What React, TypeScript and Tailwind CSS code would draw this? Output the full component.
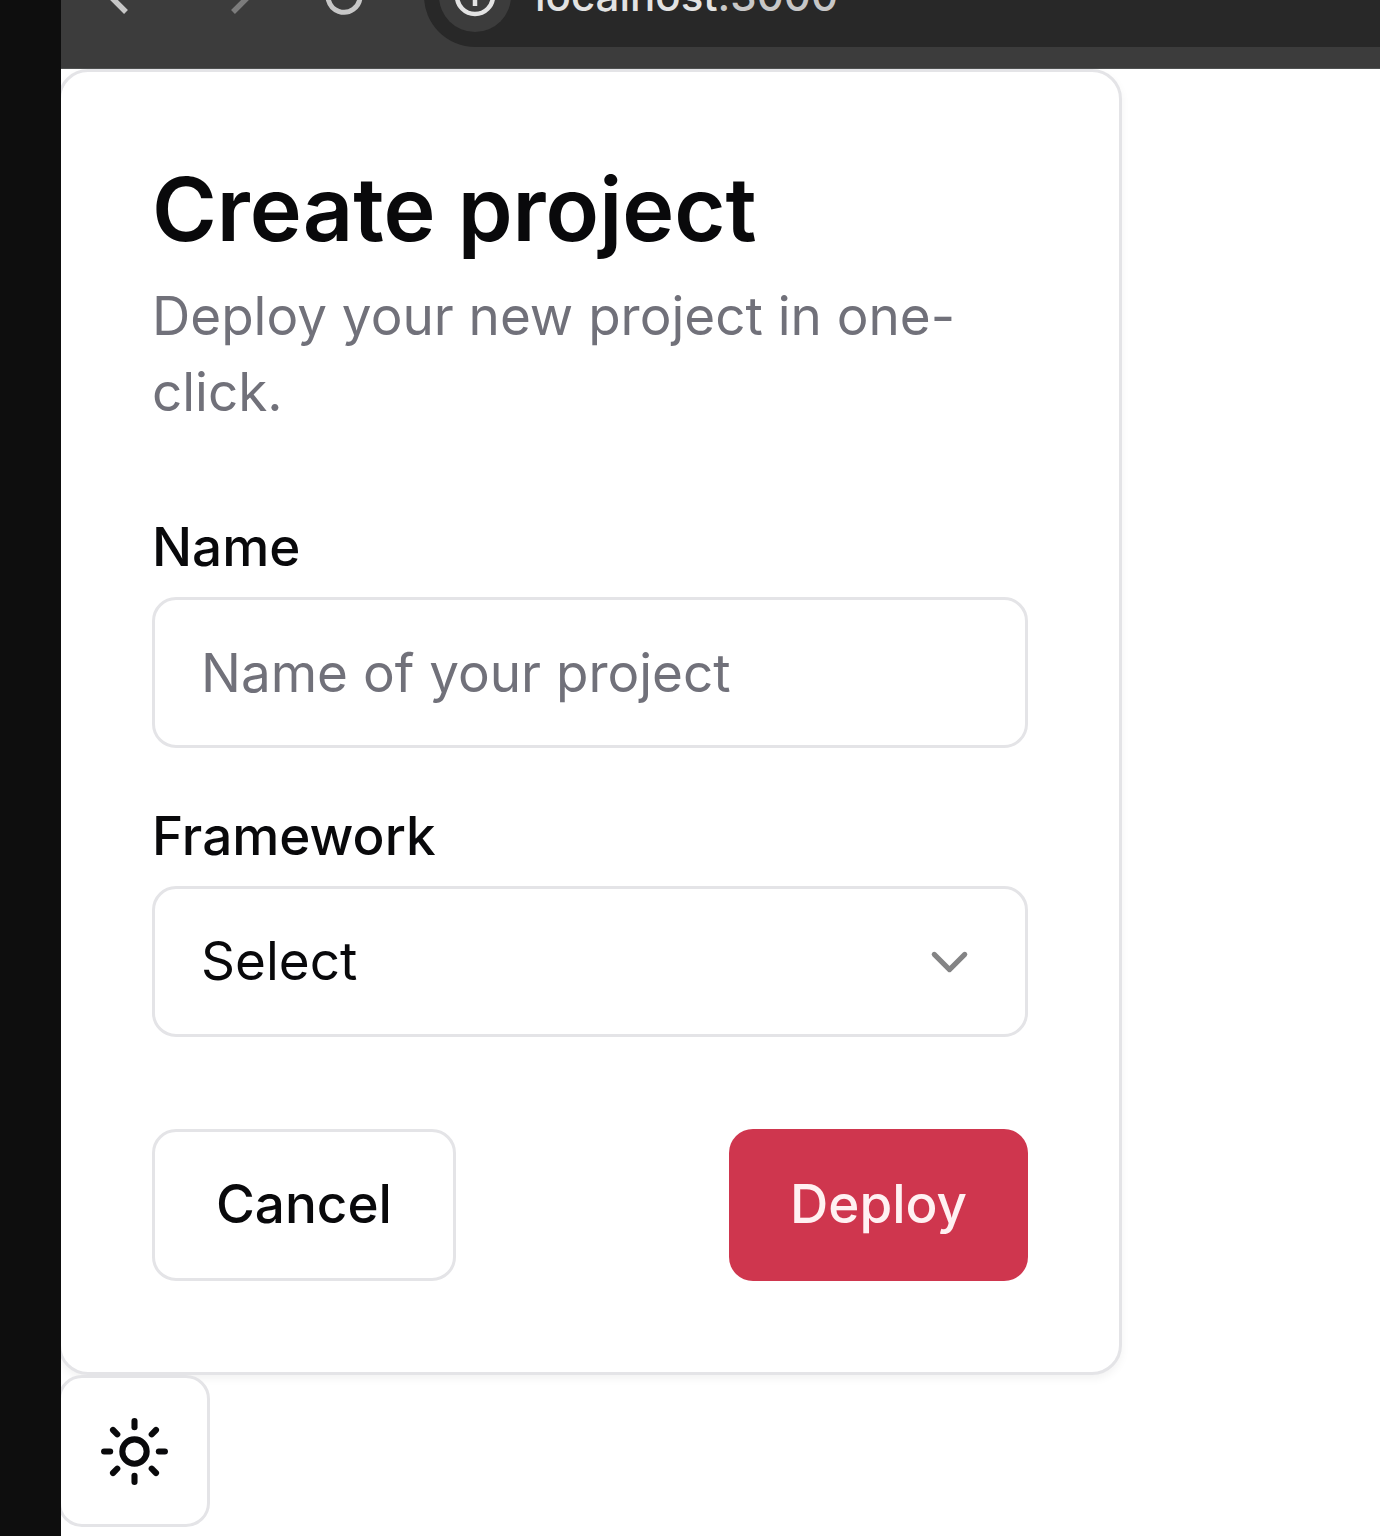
import { ChevronDown, Sun } from "lucide-react";

function BackIcon() {
  return (
    <svg viewBox="0 0 48 48" className="size-12 shrink-0" fill="none" stroke="#c7c7c7" strokeWidth="5.5" aria-hidden="true">
      <path d="M46 24H14M30 8L14 24l16 16" />
    </svg>
  );
}

function ForwardIcon() {
  return (
    <svg viewBox="0 0 48 48" className="size-12 shrink-0" fill="none" stroke="#7c7c7c" strokeWidth="5.5" aria-hidden="true">
      <path d="M8 24h33M25 8l16 16-16 16" />
    </svg>
  );
}

function ReloadIcon() {
  return (
    <svg viewBox="0 0 48 48" className="size-12 shrink-0" fill="none" stroke="#c7c7c7" strokeWidth="5" aria-hidden="true">
      <path d="M38 16.500A16 16 0 1 0 40 24M40 6v12H28" />
    </svg>
  );
}

function InfoIcon() {
  return (
    <svg viewBox="0 0 48 48" className="size-12" fill="none" stroke="#e3e3e3" strokeWidth="4.5" aria-hidden="true">
      <circle cx="24" cy="24" r="18" />
      <path d="M24 21v13M24 13v4" />
    </svg>
  );
}

function BrowserBar() {
  return (
    <header className="flex h-[69px] items-end overflow-hidden border-b border-[#505252] bg-[#3c3c3c] pb-[21px] pl-[35px]">
      <div className="flex h-[102px] shrink-0 items-center gap-16 pr-14">
        <button type="button" aria-label="Back"><BackIcon /></button>
        <button type="button" aria-label="Forward"><ForwardIcon /></button>
        <button type="button" aria-label="Reload"><ReloadIcon /></button>
      </div>
      <div className="flex h-[102px] min-w-0 flex-1 items-center gap-6 rounded-l-full bg-[#282828] pl-[15px]">
        <button type="button" aria-label="Site information" className="flex size-[72px] shrink-0 items-center justify-center rounded-full bg-[#3c3c3c]">
          <InfoIcon />
        </button>
        <span className="text-[42px] leading-none font-medium text-[#c7c7c7]">
          <span className="text-[#e3e3e3]">localhost</span>:3000
        </span>
      </div>
    </header>
  );
}

function ProjectCard() {
  return (
    <form
      onSubmit={(e) => e.preventDefault()}
      className="w-full max-w-[1064px] rounded-[30px] border-3 border-[#e4e4e7] bg-white p-[91px] shadow-[0_4px_8px_rgba(0,0,0,0.05)]"
    >
      <h1 className="text-[88px] leading-[92px] font-semibold">Create project</h1>
      <p className="mt-[23px] text-[53px] leading-[76px] text-[#71717a]">Deploy your new project in one-click.</p>

      <div className="mt-[91px] flex flex-col gap-[62px]">
        <div className="flex flex-col gap-[23px]">
          <label htmlFor="name" className="text-[53px] leading-none font-medium">Name</label>
          <input
            id="name"
            type="text"
            placeholder="Name of your project"
            className="h-[151px] w-full rounded-3xl border-3 border-[#e4e4e7] bg-white px-[46px] text-[53px] placeholder:text-[#71717a]"
          />
        </div>
        <div className="flex flex-col gap-[23px]">
          <label htmlFor="framework" className="text-[53px] leading-none font-medium">Framework</label>
          <div className="relative">
            <select
              id="framework"
              className="block h-[151px] w-full appearance-none rounded-3xl border-3 border-[#e4e4e7] bg-white px-[46px] text-[53px]"
            >
              <option>Select</option>
            </select>
            <ChevronDown className="pointer-events-none absolute top-1/2 right-12 size-[61px] -translate-y-1/2 text-[#848485]" />
          </div>
        </div>
      </div>

      <div className="mt-[92px] flex justify-between">
        <button type="button" className="h-[152px] rounded-3xl border-3 border-[#e4e4e7] bg-white px-[61px] text-[53px] font-medium">
          Cancel
        </button>
        <button type="submit" className="h-[152px] rounded-3xl bg-[#cf364e] px-[61px] text-[53px] font-medium text-[#fff1f2]">
          Deploy
        </button>
      </div>
    </form>
  );
}

export default function App() {
  return (
    <div className="flex min-h-screen bg-[#0e0e0e] font-['Inter',sans-serif] text-[#09090b]">
      <div className="min-w-0 flex-1 pl-[61px]">
        <div className="flex min-h-screen flex-col overflow-hidden bg-white">
          <BrowserBar />
          <main className="-ml-[3px]">
            <ProjectCard />
            <button
              type="button"
              aria-label="Toggle theme"
              className="flex size-[152px] items-center justify-center rounded-3xl border-3 border-[#e4e4e7] bg-white"
            >
              <Sun className="size-[73px]" />
            </button>
          </main>
        </div>
      </div>
    </div>
  );
}
